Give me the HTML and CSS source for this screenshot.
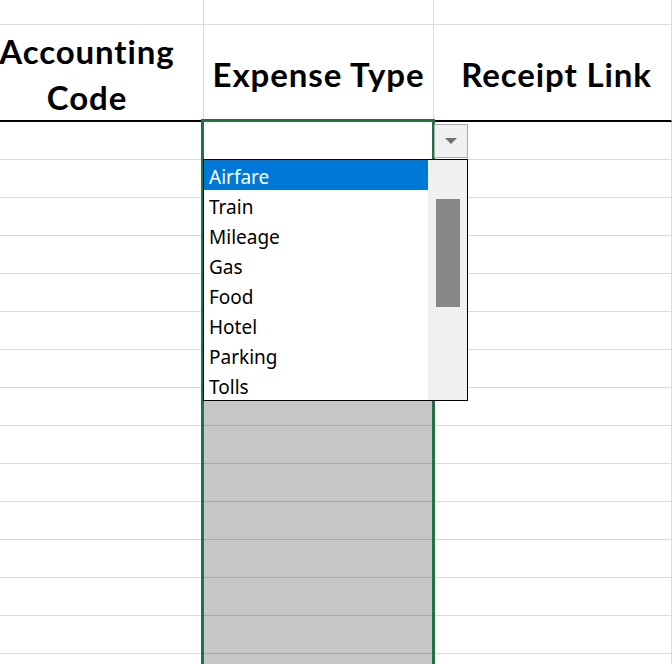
FILE: index.html
```html
<!DOCTYPE html>
<html>
<head>
<meta charset="utf-8">
<link rel="stylesheet" href="styles.css">
</head>
<body>
<div class="sheet">
  <div class="cell"></div><div class="cell"></div><div class="cell"></div>
  <div class="cell hdr hdr-a">Accounting<br>Code</div>
  <div class="cell hdr">Expense Type</div>
  <div class="cell hdr hdr-c">Receipt Link</div>

  <div class="cell"></div><div class="cell active"></div><div class="cell"></div>
  <div class="cell"></div><div class="cell sel"></div><div class="cell"></div>
  <div class="cell"></div><div class="cell sel"></div><div class="cell"></div>
  <div class="cell"></div><div class="cell sel"></div><div class="cell"></div>
  <div class="cell"></div><div class="cell sel"></div><div class="cell"></div>
  <div class="cell"></div><div class="cell sel"></div><div class="cell"></div>
  <div class="cell"></div><div class="cell sel"></div><div class="cell"></div>
  <div class="cell"></div><div class="cell sel"></div><div class="cell"></div>
  <div class="cell"></div><div class="cell sel"></div><div class="cell"></div>
  <div class="cell"></div><div class="cell sel"></div><div class="cell"></div>
  <div class="cell"></div><div class="cell sel"></div><div class="cell"></div>
  <div class="cell"></div><div class="cell sel"></div><div class="cell"></div>
  <div class="cell"></div><div class="cell sel"></div><div class="cell"></div>
  <div class="cell"></div><div class="cell sel"></div><div class="cell"></div>
  <div class="cell"></div><div class="cell sel"></div><div class="cell"></div>

  <div class="selection"></div>
  <div class="dd-btn"><span class="dd-arrow"></span></div>
  <div class="dd-list">
    <ul class="dd-items">
      <li class="hl">Airfare</li>
      <li>Train</li>
      <li>Mileage</li>
      <li>Gas</li>
      <li>Food</li>
      <li>Hotel</li>
      <li>Parking</li>
      <li>Tolls</li>
    </ul>
    <div class="dd-scroll"><div class="dd-thumb"></div></div>
  </div>
</div>
</body>
</html>
```

FILE: styles.css
```css
html, body {
  margin: 0;
  padding: 0;
  background: #fff;
  overflow: hidden;
  height: 664px;
}

.sheet {
  position: relative;
  height: 664px;
  overflow: hidden;
  display: grid;
  grid-template-columns: 204px 230px 1fr;
  grid-template-rows: 25px 97px;
  grid-auto-rows: 38px;
  font-family: "Noto Sans", sans-serif;
}

.cell {
  box-sizing: border-box;
  border-right: 1px solid #dadada;
  border-bottom: 1px solid #dadada;
  background: #fff;
}

.hdr {
  border-bottom: 2px solid #000;
  display: flex;
  align-items: center;
  justify-content: center;
  text-align: center;
  font-family: Lato, "Liberation Sans", sans-serif;
  font-weight: 700;
  font-size: 33px;
  letter-spacing: 0.9px;
  line-height: 46px;
  color: #000;
  white-space: nowrap;
  padding-top: 2px;
}

.hdr-a {
  padding-right: 29px;
}

.hdr-c {
  padding-left: 8px;
}

.sel {
  background: #c6c6c6;
  border-bottom-color: #a8a8a8;
}

.selection {
  position: absolute;
  left: 201px;
  top: 119px;
  width: 234px;
  height: 620px;
  box-sizing: border-box;
  border: 3px solid #217346;
  pointer-events: none;
}

.dd-btn {
  position: absolute;
  left: 434px;
  top: 124px;
  width: 34px;
  height: 34px;
  box-sizing: border-box;
  border: 1px solid #ababab;
  background: #f0f0f0;
  display: flex;
  align-items: center;
  justify-content: center;
}

.dd-arrow {
  width: 0;
  height: 0;
  border-left: 6px solid transparent;
  border-right: 6px solid transparent;
  border-top: 6px solid #6e6e6e;
}

.dd-list {
  position: absolute;
  left: 203px;
  top: 159px;
  width: 265px;
  height: 242px;
  box-sizing: border-box;
  border: 1px solid #000;
  background: #fff;
  display: flex;
}

.dd-items {
  list-style: none;
  margin: 0;
  padding: 0;
  width: 224px;
}

.dd-items li {
  height: 28px;
  padding-top: 2px;
  line-height: 30px;
  padding-left: 5px;
  font-size: 19px;
  color: #000;
}

.dd-items li.hl {
  background: #0078d7;
  color: #fff;
}

.dd-scroll {
  flex: 1;
  background: #f0f0f0;
  padding: 39px 0 0 8px;
  box-sizing: border-box;
}

.dd-thumb {
  width: 24px;
  height: 108px;
  background: #878787;
}
```
